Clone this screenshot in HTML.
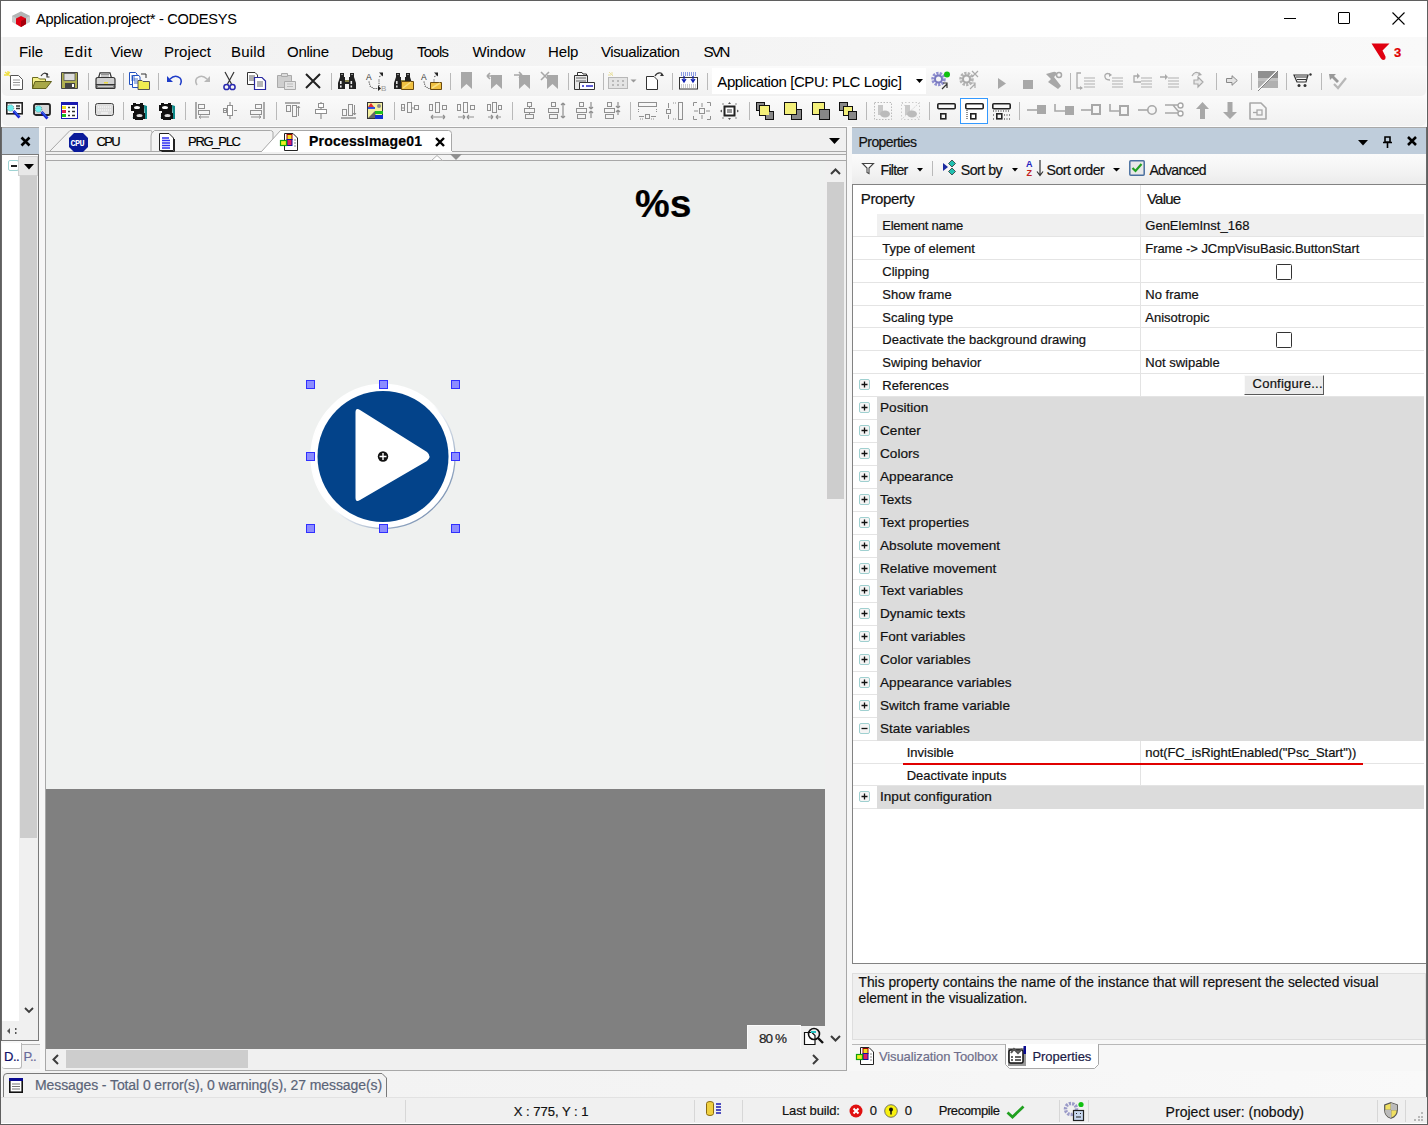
<!DOCTYPE html>
<html><head><meta charset="utf-8">
<style>
*{margin:0;padding:0;box-sizing:border-box}
html,body{width:1428px;height:1125px;overflow:hidden}
body{position:relative;background:#f7f7f7;font-family:"Liberation Sans",sans-serif;color:#000}
.a{position:absolute}
.t{position:absolute;white-space:nowrap;line-height:1;-webkit-text-stroke:0.2px currentColor}
svg{position:absolute;overflow:visible}
</style></head><body>
<div class="a" style="left:0px;top:0px;width:1428px;height:37px;background:#fff;"></div>
<svg style="left:11px;top:10px;" width="20" height="18" viewBox="0 0 20 18"><path d="M1 6L10 1.5L19 6V12L10 17L1 12Z" fill="#c9cbcb"/><path d="M10 1.5L19 6L10 10.5L1 6Z" fill="#b3b5b5"/><path d="M5 8.5L10 6L15 8.5V14L10 17L5 14Z" fill="#e00012"/><path d="M10 11V17L15 14V8.5Z" fill="#a8000c"/></svg>
<div class="t" style="left:36px;top:11.59px;font-size:14.6px;color:#000;letter-spacing:-0.288px;-webkit-text-stroke:0.05px #000">Application.project* - CODESYS</div>
<div class="a" style="left:1284px;top:18px;width:12px;height:1px;background:#000;"></div>
<div class="a" style="left:1338px;top:12px;width:12px;height:12px;border:1px solid #000;border-radius:1px"></div>
<svg style="left:1392px;top:12px;" width="13" height="13" viewBox="0 0 13 13"><path d="M0.5 0.5L12.5 12.5M12.5 0.5L0.5 12.5" stroke="#000" stroke-width="1.1"/></svg>
<div class="a" style="left:3px;top:37px;width:1422px;height:29px;background:linear-gradient(to right,#f2f2f2,#f4f4f4 50%,#f9f9f9);"></div>
<div class="t" style="left:19px;top:44.25px;font-size:15px;color:#000;letter-spacing:-0.05px;-webkit-text-stroke:0.05px #000">File</div>
<div class="t" style="left:64px;top:44.25px;font-size:15px;color:#000;letter-spacing:0.683px;-webkit-text-stroke:0.05px #000">Edit</div>
<div class="t" style="left:110.5px;top:44.25px;font-size:15px;color:#000;letter-spacing:-0.133px;-webkit-text-stroke:0.05px #000">View</div>
<div class="t" style="left:164px;top:44.25px;font-size:15px;color:#000;letter-spacing:0.058px;-webkit-text-stroke:0.05px #000">Project</div>
<div class="t" style="left:231px;top:44.25px;font-size:15px;color:#000;letter-spacing:0.175px;-webkit-text-stroke:0.05px #000">Build</div>
<div class="t" style="left:287px;top:44.25px;font-size:15px;color:#000;letter-spacing:-0.27px;-webkit-text-stroke:0.05px #000">Online</div>
<div class="t" style="left:351.5px;top:44.25px;font-size:15px;color:#000;letter-spacing:-0.562px;-webkit-text-stroke:0.05px #000">Debug</div>
<div class="t" style="left:417px;top:44.25px;font-size:15px;color:#000;letter-spacing:-0.738px;-webkit-text-stroke:0.05px #000">Tools</div>
<div class="t" style="left:472.5px;top:44.25px;font-size:15px;color:#000;letter-spacing:-0.08px;-webkit-text-stroke:0.05px #000">Window</div>
<div class="t" style="left:548px;top:44.25px;font-size:15px;color:#000;letter-spacing:-0.133px;-webkit-text-stroke:0.05px #000">Help</div>
<div class="t" style="left:601px;top:44.25px;font-size:15px;color:#000;letter-spacing:-0.417px;-webkit-text-stroke:0.05px #000">Visualization</div>
<div class="t" style="left:703.5px;top:44.25px;font-size:15px;color:#000;letter-spacing:-1.95px;-webkit-text-stroke:0.05px #000">SVN</div>
<svg style="left:1371px;top:43px;" width="19" height="18" viewBox="0 0 19 18"><path d="M0.5 0.5H18.5L11.5 7.5L14.5 13.5Q15 17 12 17Q10.5 16.5 9.8 15.2Z" fill="#e00010"/></svg>
<div class="t" style="left:1394px;top:46.45px;font-size:13px;color:#e00000;font-weight:bold;">3</div>
<div class="a" style="left:0px;top:66px;width:1428px;height:61px;background:#fbfbfb;"></div>
<div class="a" style="left:2px;top:67px;width:1424px;height:28.5px;background:linear-gradient(#fafafa,#f1f1f1);border-radius:0 0 5px 5px"></div>
<div class="a" style="left:2px;top:97px;width:1424px;height:28.5px;background:linear-gradient(#fafafa,#f1f1f1);border-radius:5px"></div>
<svg style="left:4px;top:71px;" width="20" height="19" viewBox="0 0 20 19"><path d="M6.5 4.5H14.5L18.5 8.5V18.5H6.5Z" fill="#fff" stroke="#555"/><path d="M9 9H16M9 11.5H16M9 14H16" stroke="#999"/><path d="M1 1L6 5M4 0V4M0 4H4M6 1L4 3" stroke="#f0e040" stroke-width="1.3"/></svg>
<svg style="left:32px;top:72px;" width="20" height="18" viewBox="0 0 20 18"><path d="M0.5 5.5H6L7.5 7H13.5V16.5H0.5Z" fill="#f5f08a" stroke="#6b6b20"/><path d="M3 9.5H19.5L14 16.5H0.5Z" fill="#a8a848" stroke="#60601c"/><path d="M9 4Q12 -1 16 3" stroke="#333" fill="none" stroke-width="1.2"/><path d="M15 1V5H17.5" stroke="#333" fill="none" stroke-width="1.2"/></svg>
<svg style="left:61px;top:72px;" width="18" height="17" viewBox="0 0 18 17"><path d="M0.5 0.5H16.5V16.5H0.5Z" fill="#b0b050" stroke="#444"/><rect x="3" y="1.5" width="11" height="7" fill="#ddd" stroke="#555" stroke-width=".8"/><rect x="4" y="11" width="10" height="5.5" fill="#444"/><rect x="11" y="12" width="2" height="3" fill="#fff"/></svg>
<div class="a" style="left:88px;top:73px;width:1px;height:17px;background:#b9b9b9;"></div>
<svg style="left:95px;top:72px;" width="21" height="18" viewBox="0 0 21 18"><path d="M5 0.8H15L16.5 6H3.5Z" fill="#fff" stroke="#333" stroke-width="1.2"/><path d="M6 2.5H14M6 4H14" stroke="#777" stroke-width=".8"/><path d="M1 7.5Q1 5.5 3 5.5H18Q20 5.5 20 7.5V12.5H1Z" fill="#d0d0d0" stroke="#333" stroke-width="1.2"/><rect x="1" y="12.5" width="19" height="4" rx="1" fill="#888" stroke="#333" stroke-width="1.2"/><rect x="9" y="10" width="4" height="1.5" fill="#e8d840"/><path d="M3 14.5H18" stroke="#ccc"/></svg>
<div class="a" style="left:123px;top:73px;width:1px;height:17px;background:#b9b9b9;"></div>
<svg style="left:129px;top:72px;" width="21" height="18" viewBox="0 0 21 18"><path d="M0.5 0.5H6.5L8 2V12.5H0.5Z" fill="#fff" stroke="#2050c0"/><path d="M3.5 3.5H10L11 5V15.5H3.5Z" fill="#fff" stroke="#2050c0"/><path d="M2 4H6M2 6H6M2 8H6M5 7H9M5 9H9M5 11H9" stroke="#2050c0" stroke-width=".8"/><path d="M9 8.5H13L14 9.5H20.5V17.5H9Z" fill="#f0ec50" stroke="#555"/><path d="M12 2H17V6" stroke="#333" fill="none"/></svg>
<div class="a" style="left:158px;top:73px;width:1px;height:17px;background:#b9b9b9;"></div>
<svg style="left:167px;top:74px;" width="16" height="13" viewBox="0 0 16 13"><path d="M3 5Q8 0 13 4Q15.5 7 13 11" stroke="#1e3cc8" stroke-width="1.5" fill="none"/><path d="M0 2L6 8H0Z" fill="#1e3cc8"/></svg>
<svg style="left:194px;top:74px;" width="16" height="13" viewBox="0 0 16 13"><path d="M13 5Q8 0 3 4Q0.5 7 3 11" stroke="#b8b8b8" stroke-width="1.6" fill="none"/><path d="M16 2L10 8H16Z" fill="#b8b8b8"/></svg>
<svg style="left:223px;top:72px;" width="13" height="19" viewBox="0 0 13 19"><path d="M2 0L8.5 12M11 0L4.5 12" stroke="#333" stroke-width="1.2"/><circle cx="3.5" cy="15" r="2.6" fill="none" stroke="#2828b0" stroke-width="1.5"/><circle cx="9.5" cy="15" r="2.6" fill="none" stroke="#2828b0" stroke-width="1.5"/></svg>
<svg style="left:247px;top:72px;" width="19" height="18" viewBox="0 0 19 18"><path d="M0.5 0.5H8L10.5 3V12.5H0.5Z" fill="#fff" stroke="#333"/><path d="M2 4H8M2 6H8M2 8H8" stroke="#333" stroke-width=".8"/><path d="M7.5 5.5H15L18.5 9V17.5H7.5Z" fill="#fff" stroke="#2828a0" stroke-width="1.2"/><path d="M10 10H16M10 12H16M10 14H16" stroke="#444" stroke-width=".8"/></svg>
<svg style="left:276px;top:72px;" width="20" height="18" viewBox="0 0 20 18"><path d="M1.5 3.5H15.5V15.5H1.5Z" fill="#cfcfcf" stroke="#aaa"/><path d="M5.5 1.5H11.5V4.5H5.5Z" fill="#ddd" stroke="#aaa"/><path d="M8.5 9.5H19.5V17.5H8.5Z" fill="#e4e4e4" stroke="#aaa"/><path d="M11 12H17M11 14.5H17" stroke="#bbb"/></svg>
<svg style="left:305px;top:73px;" width="16" height="16" viewBox="0 0 16 16"><path d="M1 1L15 15M15 1L1 15" stroke="#222" stroke-width="2"/></svg>
<div class="a" style="left:331px;top:73px;width:1px;height:17px;background:#b9b9b9;"></div>
<svg style="left:338px;top:72px;" width="19" height="18" viewBox="0 0 19 18"><path d="M2 1H6V5H7V8H11V5H12V1H16V5L18 11V17H11V12H7V17H0V11L2 5Z" fill="#222"/><rect x="2" y="9" width="1.6" height="3" fill="#eee"/><rect x="2" y="13.5" width="1.6" height="2" fill="#eee"/><rect x="12.5" y="9" width="1.6" height="3" fill="#eee"/><rect x="12.5" y="13.5" width="1.6" height="2" fill="#eee"/><rect x="3" y="2" width="2" height="1" fill="#888"/><rect x="13" y="2" width="2" height="1" fill="#888"/><path d="M7 9H11" stroke="#e8e070"/></svg>
<svg style="left:366px;top:72px;" width="22" height="18" viewBox="0 0 22 18"><text x="0" y="7.5" font-size="8.5" fill="#333" font-family="Liberation Sans">A</text><path d="M3 9.5L4 14L7.5 16.5H12M13 14V7M13.5 5L16 2" stroke="#444" stroke-width="1.1" stroke-dasharray="1.1 1.1" fill="none"/><path d="M17 0.5V4.5L13 0.5Z" fill="#222"/><path d="M12 13.5L15 16.5L12 19Z" fill="#222"/><text x="15" y="19" font-size="8" fill="#999" font-family="Liberation Sans">B</text></svg>
<svg style="left:394px;top:72px;" width="20" height="18" viewBox="0 0 20 18"><path d="M2 1H6V5H7V8H11V5H12V1H16V5L18 11V17H11V12H7V17H0V11L2 5Z" fill="#222"/><rect x="2" y="9" width="1.6" height="3" fill="#ddd"/><rect x="2" y="13.5" width="1.6" height="2" fill="#ddd"/><rect x="12.5" y="9" width="1.6" height="3" fill="#ddd"/><rect x="12.5" y="13.5" width="1.6" height="2" fill="#ddd"/><rect x="3" y="2" width="2" height="1" fill="#888"/><rect x="13" y="2" width="2" height="1" fill="#888"/><path d="M7 9H11" stroke="#e8e070"/><path d="M7.5 9.5H19.5V17.5H7.5Z" fill="#f0c040" stroke="#6a4a10"/><path d="M9 16L17 10" stroke="#fff0a0" stroke-width="1.5" opacity=".7"/></svg>
<svg style="left:421px;top:72px;" width="21" height="18" viewBox="0 0 21 18"><text x="0" y="7.5" font-size="8.5" fill="#333" font-family="Liberation Sans">A</text><path d="M3 9.5L4 14L7.5 16.5H12M13 14V7M13.5 5L16 2" stroke="#444" stroke-width="1.1" stroke-dasharray="1.1 1.1" fill="none"/><path d="M17 0.5V4.5L13 0.5Z" fill="#222"/><path d="M9.5 10.5H20.5V17.5H9.5Z" fill="#f0c040" stroke="#6a4a10"/><path d="M11 16L19 11" stroke="#fff0a0" stroke-width="1.5" opacity=".7"/></svg>
<div class="a" style="left:450px;top:73px;width:1px;height:17px;background:#b9b9b9;"></div>
<svg style="left:461px;top:72px;" width="11" height="17" viewBox="0 0 11 17"><path d="M0 0H11V17L5.5 12L0 17Z" fill="#a8a8a8"/></svg>
<svg style="left:487px;top:72px;" width="15" height="17" viewBox="0 0 15 17"><path d="M4 3H15V17L9.5 12L4 17Z" fill="#a8a8a8"/><path d="M0 4H8M0 4L3 1M0 4L3 7" stroke="#a8a8a8" stroke-width="1.6"/></svg>
<svg style="left:514px;top:72px;" width="16" height="17" viewBox="0 0 16 17"><path d="M5 3H16V17L10.5 12L5 17Z" fill="#a8a8a8"/><path d="M0 3H8M8 3L5 0M8 3L5 6" stroke="#a8a8a8" stroke-width="1.6"/></svg>
<svg style="left:541px;top:72px;" width="17" height="17" viewBox="0 0 17 17"><path d="M6 3H17V17L11.5 12L6 17Z" fill="#a8a8a8"/><path d="M0 0L8 8M8 0L0 8" stroke="#a8a8a8" stroke-width="1.6"/></svg>
<div class="a" style="left:568px;top:73px;width:1px;height:17px;background:#b9b9b9;"></div>
<svg style="left:574px;top:72px;" width="21" height="18" viewBox="0 0 21 18"><path d="M3.5 0.5H8L9 2H12.5V7.5H3.5Z" fill="#fff" stroke="#333"/><path d="M0.5 3.5H13.5V17.5H0.5Z" fill="#e8e8e8" stroke="#333"/><path d="M2 6H12M2 9H12" stroke="#666"/><path d="M5.5 10.5H20.5V17.5H5.5Z" fill="#fff" stroke="#333"/><path d="M8 14H10M12 14H19" stroke="#2828c8" stroke-width="1.5"/></svg>
<div class="a" style="left:603px;top:73px;width:1px;height:17px;background:#b9b9b9;"></div>
<svg style="left:608px;top:72px;" width="29" height="18" viewBox="0 0 29 18"><rect x="0.5" y="5.5" width="19" height="11" fill="#e4e4e4" stroke="#b8b8b8"/><path d="M4 9H6M9 9H11M14 9H16M4 13H6M9 13H11M14 13H16" stroke="#aaa" stroke-width="1.5"/><path d="M1 0L5 4M4 0V3M0 3H3" stroke="#e8e0a0"/><path d="M22.5 7.5H28.5L25.5 10.5Z" fill="#999"/></svg>
<svg style="left:646px;top:72px;" width="18" height="18" viewBox="0 0 18 18"><path d="M0.5 4.5H8L11.5 8V17.5H0.5Z" fill="#fff" stroke="#333"/><path d="M9 4Q11 0 15 1L16.5 4" stroke="#333" fill="none" stroke-width="1.2"/><path d="M14 4H18L16 1Z" fill="#333"/></svg>
<div class="a" style="left:672px;top:73px;width:1px;height:17px;background:#b9b9b9;"></div>
<svg style="left:679px;top:72px;" width="19" height="18" viewBox="0 0 19 18"><rect x="0.5" y="5.5" width="18" height="11.5" fill="#fff" stroke="#333"/><path d="M2 13H17M2 15H17" stroke="#999" stroke-dasharray="1 1"/><path d="M2 1H17M2 3H17" stroke="#2040d0" stroke-dasharray="1 1"/><path d="M5 4V9M3 7L5 10L7 7M14 4V9M12 7L14 10L16 7" stroke="#1020b0" stroke-width="1.3" fill="none"/></svg>
<div class="a" style="left:707px;top:73px;width:1px;height:17px;background:#b9b9b9;"></div>
<div class="a" style="left:712px;top:68px;width:214px;height:26px;background:#fff;"></div>
<div class="t" style="left:717.3px;top:74.25px;font-size:15px;color:#000;letter-spacing:-0.391px;-webkit-text-stroke:0.05px #000">Application [CPU: PLC Logic]</div>
<svg style="left:916px;top:79px;" width="7" height="4" viewBox="0 0 7 4"><path d="M0 0H7L3.5 4Z" fill="#000"/></svg>
<svg style="left:931px;top:71px;" width="21" height="20" viewBox="0 0 21 20"><circle cx="7.5" cy="8" r="5.5" fill="none" stroke="#8f8fd0" stroke-width="3.5" stroke-dasharray="2.2 1.1"/><circle cx="7.5" cy="8" r="3.5" fill="none" stroke="#7a7ac0" stroke-width="2"/><circle cx="16" cy="3.5" r="3" fill="#10c010"/><path d="M12 12H16V17M11 18L16 13" stroke="#333" stroke-width="1.2" fill="none"/></svg>
<svg style="left:959px;top:71px;" width="21" height="20" viewBox="0 0 21 20"><circle cx="7.5" cy="8" r="5.5" fill="none" stroke="#b4b4b4" stroke-width="3.5" stroke-dasharray="2.2 1.1"/><circle cx="7.5" cy="8" r="3.5" fill="none" stroke="#aaa" stroke-width="2"/><path d="M13 0L19 6M19 0L13 6M12 12H16V17M11 18L16 13" stroke="#aaa" stroke-width="1.2" fill="none"/></svg>
<svg style="left:998px;top:78px;" width="8" height="11" viewBox="0 0 8 11"><path d="M0 0L8 5.5L0 11Z" fill="#a8a8a8"/></svg>
<div class="a" style="left:1023px;top:80px;width:10px;height:9px;background:#a8a8a8;"></div>
<svg style="left:1044px;top:71px;" width="19" height="19" viewBox="0 0 19 19"><path d="M2 3L7 8L4 11L14 18L17 15L10 6L13 3Q12 0 9 1Z" fill="#a8a8a8"/><circle cx="15" cy="4" r="2.5" fill="none" stroke="#a8a8a8" stroke-width="1.5"/></svg>
<div class="a" style="left:1070px;top:73px;width:1px;height:17px;background:#b9b9b9;"></div>
<svg style="left:1076px;top:72px;" width="20" height="19" viewBox="0 0 20 19"><path d="M5 1H1V16H6" stroke="#aaa" stroke-width="1.3" fill="none"/><path d="M4 14L7 16L4 18Z" fill="#aaa"/><path d="M8 6H19M8 9H19M8 12H19M8 15H19" stroke="#b0b0b0" stroke-width="1.2" stroke-dasharray="11 0"/></svg>
<svg style="left:1104px;top:72px;" width="20" height="19" viewBox="0 0 20 19"><path d="M6 8Q0 8 1 3Q3 0 7 3" stroke="#aaa" stroke-width="1.3" fill="none"/><path d="M5 1L8 3L5 5Z" fill="#aaa"/><path d="M8 6H19M8 9H19M8 12H19M8 15H19" stroke="#b0b0b0" stroke-width="1.2" stroke-dasharray="11 0"/></svg>
<svg style="left:1133px;top:72px;" width="19" height="19" viewBox="0 0 19 19"><path d="M8 10H1V4H5" stroke="#aaa" stroke-width="1.3" fill="none"/><path d="M4 1L7 4L4 7Z" fill="#aaa"/><path d="M8 6H19M8 9H19M8 12H19M8 15H19" stroke="#b0b0b0" stroke-width="1.2" stroke-dasharray="11 0"/></svg>
<svg style="left:1160px;top:72px;" width="19" height="19" viewBox="0 0 19 19"><path d="M0 5H6" stroke="#aaa" stroke-width="1.5"/><path d="M5 2L8 5L5 8Z" fill="#aaa"/><path d="M8 6H19M8 9H19M8 12H19M8 15H19" stroke="#b0b0b0" stroke-width="1.2" stroke-dasharray="11 0"/></svg>
<svg style="left:1190px;top:71px;" width="14" height="20" viewBox="0 0 14 20"><path d="M2 5Q5 -1 10 3M4 9H8V6L13 11L8 16V13H4Z" stroke="#aaa" stroke-width="1.2" fill="#e8e8e8"/><path d="M9 1L12 4L8 5Z" fill="#aaa"/></svg>
<div class="a" style="left:1216px;top:73px;width:1px;height:17px;background:#b9b9b9;"></div>
<svg style="left:1226px;top:75px;" width="12" height="11" viewBox="0 0 12 11"><path d="M0.5 3.5H6V0.7L11.3 5.5L6 10.3V7.5H0.5Z" fill="#e4e4e4" stroke="#888"/></svg>
<div class="a" style="left:1251px;top:73px;width:1px;height:17px;background:#b9b9b9;"></div>
<svg style="left:1258px;top:71px;" width="20" height="20" viewBox="0 0 20 20"><path d="M0 0H20V7H0Z" fill="#909090"/><path d="M0 7H20V10H0Z" fill="#c0c0c0"/><path d="M0 10H20V17H0Z" fill="#b0b0b0"/><path d="M0 19L19 0" stroke="#fff" stroke-width="1.5"/><path d="M0 20L20 0" stroke="#666" stroke-width=".8"/></svg>
<div class="a" style="left:1286px;top:73px;width:1px;height:17px;background:#b9b9b9;"></div>
<svg style="left:1294px;top:73px;" width="18" height="15" viewBox="0 0 18 15"><path d="M0 2H14L12 9H3Z" fill="none" stroke="#333" stroke-width="1.2"/><path d="M2 4H13M3 6.5H12" stroke="#333"/><circle cx="5" cy="12.5" r="1.5" fill="#333"/><circle cx="11" cy="12.5" r="1.5" fill="#333"/><circle cx="16.5" cy="1.5" r="1.2" fill="#333"/></svg>
<div class="a" style="left:1321px;top:73px;width:1px;height:17px;background:#b9b9b9;"></div>
<svg style="left:1328px;top:72px;" width="19" height="18" viewBox="0 0 19 18"><path d="M1 2H8L6 4L11 9L9 11L4 6L2 8Z" fill="#999"/><path d="M6 12L10 16L18 6" stroke="#b8b8b8" stroke-width="2.2" fill="none"/></svg>
<svg style="left:6px;top:102px;" width="17" height="18" viewBox="0 0 17 18"><rect x="0.8" y="0.8" width="15.4" height="11" fill="#fff" stroke="#222" stroke-width="1.6"/><path d="M10 4H14M10 6.5H14" stroke="#333" stroke-width="1.3"/><circle cx="4.5" cy="6" r="3.3" fill="#70f0f0" stroke="#555" stroke-width=".6" stroke-dasharray="1 1"/><path d="M7.5 9L13.5 15.5" stroke="#1a1ad0" stroke-width="2.8"/><path d="M8 9L13 14.5" stroke="#3aa0f0" stroke-width=".8"/></svg>
<svg style="left:33px;top:103px;" width="18" height="18" viewBox="0 0 18 18"><rect x="1" y="1" width="16" height="11" rx="1.8" fill="#d8d8d8" stroke="#222" stroke-width="1.8"/><circle cx="5.5" cy="6" r="3.3" fill="#70f0f0" stroke="#555" stroke-width=".6" stroke-dasharray="1 1"/><path d="M8.5 9L14.5 15.5" stroke="#1a1ad0" stroke-width="2.8"/><path d="M9 9L14 14.5" stroke="#3aa0f0" stroke-width=".8"/></svg>
<svg style="left:61px;top:102px;" width="17" height="17" viewBox="0 0 17 17"><rect x="0" y="0" width="17" height="17" fill="#1a1ab0"/><rect x="1" y="3" width="15" height="13" fill="#fff"/><rect x="1" y="4" width="4" height="3" fill="#f0e020"/><rect x="1" y="8" width="4" height="3" fill="#e02050"/><rect x="1" y="12" width="4" height="3" fill="#20c020"/><path d="M7 5.5H9M11 5.5H14M7 9.5H9M11 9.5H14M7 13.5H9M11 13.5H14" stroke="#333" stroke-width="1.6"/></svg>
<div class="a" style="left:88px;top:102px;width:1px;height:18px;background:#b9b9b9;"></div>
<svg style="left:95px;top:103px;" width="19" height="14" viewBox="0 0 19 14"><rect x="0.5" y="0.5" width="18" height="12" rx="2" fill="#ddd" stroke="#444"/><path d="M3 4H16M3 7H16" stroke="#fff" stroke-dasharray="1.2 .8"/><path d="M6 10H13" stroke="#fff"/></svg>
<div class="a" style="left:123px;top:102px;width:1px;height:18px;background:#b9b9b9;"></div>
<svg style="left:131px;top:103px;" width="16" height="17" viewBox="0 0 16 17"><path d="M13 2L16 3V16H14Z" fill="#0e8a8a"/><path d="M1 14L3 16H5Z" fill="#0e8a8a"/><path d="M2 0H5V1H9V0H12V2H13V8H11V9H3V8H0V2H2Z" fill="#111"/><path d="M3 8H6V9H10V8H13V10H14V16H12V17H4V16H2V10H3Z" fill="#111"/><ellipse cx="6" cy="4.5" rx="3" ry="1.6" fill="#fff"/><ellipse cx="8.5" cy="12.5" rx="3" ry="1.6" fill="#ddd"/></svg>
<svg style="left:159px;top:103px;" width="16" height="17" viewBox="0 0 16 17"><path d="M13 2L16 3V16H14Z" fill="#0e8a8a"/><path d="M1 14L3 16H5Z" fill="#0e8a8a"/><path d="M2 0H5V1H9V0H12V2H13V8H11V9H3V8H0V2H2Z" fill="#111"/><path d="M3 8H6V9H10V8H13V10H14V16H12V17H4V16H2V10H3Z" fill="#111"/><ellipse cx="6" cy="4.5" rx="3" ry="1.6" fill="#fff"/><ellipse cx="8.5" cy="12.5" rx="3" ry="1.6" fill="#ddd"/></svg>
<div class="a" style="left:185px;top:102px;width:1px;height:18px;background:#b9b9b9;"></div>
<svg style="left:195px;top:102px;" width="15" height="17" viewBox="0 0 15 17"><path d="M1 0V17" stroke="#909090" stroke-width="1.5"/><rect x="3.5" y="2.5" width="6" height="4" fill="none" stroke="#909090"/><rect x="3.5" y="8.5" width="11" height="4" fill="none" stroke="#909090"/><path d="M14 15H4M4 15L6 13.5M4 15L6 16.5" stroke="#909090"/></svg>
<svg style="left:223px;top:102px;" width="14" height="17" viewBox="0 0 14 17"><path d="M7 0V17" stroke="#909090" stroke-width="1.2"/><rect x="4.5" y="3.5" width="5" height="10" fill="#fff" stroke="#909090"/><path d="M0 8.5H3M11 8.5H14" stroke="#909090"/><rect x="0.5" y="6.5" width="3" height="4" fill="none" stroke="#909090"/></svg>
<svg style="left:250px;top:102px;" width="15" height="17" viewBox="0 0 15 17"><path d="M14 0V17" stroke="#909090" stroke-width="1.5"/><rect x="5.5" y="2.5" width="6" height="4" fill="none" stroke="#909090"/><rect x="0.5" y="8.5" width="11" height="4" fill="none" stroke="#909090"/><path d="M1 15H11M11 15L9 13.5M11 15L9 16.5" stroke="#909090"/></svg>
<div class="a" style="left:276px;top:102px;width:1px;height:18px;background:#b9b9b9;"></div>
<svg style="left:285px;top:102px;" width="15" height="17" viewBox="0 0 15 17"><path d="M0 1H15" stroke="#909090" stroke-width="1.5"/><rect x="1.5" y="3.5" width="4" height="6" fill="none" stroke="#909090"/><rect x="7.5" y="3.5" width="4" height="11" fill="none" stroke="#909090"/><path d="M13.5 14V4M13.5 4L12 6M13.5 4L15 6" stroke="#909090"/></svg>
<svg style="left:314px;top:102px;" width="14" height="17" viewBox="0 0 14 17"><path d="M7 0V17" stroke="#909090" stroke-width="1.2"/><rect x="4.5" y="1.5" width="5" height="4" fill="#fff" stroke="#909090"/><rect x="1.5" y="7.5" width="11" height="4" fill="#fff" stroke="#909090"/></svg>
<svg style="left:341px;top:102px;" width="15" height="17" viewBox="0 0 15 17"><path d="M0 16H15" stroke="#909090" stroke-width="1.5"/><rect x="1.5" y="7.5" width="4" height="6" fill="none" stroke="#909090"/><rect x="7.5" y="2.5" width="4" height="11" fill="none" stroke="#909090"/><path d="M13.5 3V13M13.5 13L12 11M13.5 13L15 11" stroke="#909090"/></svg>
<svg style="left:367px;top:102px;" width="16" height="17" viewBox="0 0 16 17"><rect x="0.5" y="0.5" width="15" height="16" fill="#f4f0a0" stroke="#333"/><path d="M1 5L4 1L7 5Z" fill="#e03030"/><rect x="1" y="5" width="7" height="2" fill="#3050e0"/><circle cx="12" cy="4" r="2" fill="#888"/><path d="M1 16L8 9L9 16Z" fill="#666"/><rect x="8" y="9" width="8" height="3" fill="#20c020"/><rect x="8" y="13" width="8" height="4" fill="#1030d0"/></svg>
<div class="a" style="left:394px;top:102px;width:1px;height:18px;background:#b9b9b9;"></div>
<svg style="left:401px;top:102px;" width="19" height="18" viewBox="0 0 19 18"><rect x="0.5" y="2.5" width="3" height="6" fill="none" stroke="#909090"/><rect x="6.5" y="0.5" width="4" height="10" fill="none" stroke="#909090"/><rect x="13.5" y="3.5" width="4" height="4" fill="none" stroke="#909090"/><path d="M0 6H3M10 6H13" stroke="#909090"/></svg>
<svg style="left:429px;top:102px;" width="19" height="18" viewBox="0 0 19 18"><rect x="0.5" y="2.5" width="3" height="6" fill="none" stroke="#909090"/><rect x="6.5" y="0.5" width="4" height="10" fill="none" stroke="#909090"/><rect x="13.5" y="3.5" width="4" height="4" fill="none" stroke="#909090"/><path d="M2 15H16M2 15L4 13M2 15L4 17M16 15L14 13M16 15L14 17" stroke="#909090" stroke-width="1.2"/></svg>
<svg style="left:457px;top:102px;" width="19" height="18" viewBox="0 0 19 18"><rect x="0.5" y="2.5" width="3" height="6" fill="none" stroke="#909090"/><rect x="6.5" y="0.5" width="4" height="10" fill="none" stroke="#909090"/><rect x="13.5" y="3.5" width="4" height="4" fill="none" stroke="#909090"/><path d="M1 15H8M8 15L6 13M8 15L6 17M17 15H10M10 15L12 13M10 15L12 17" stroke="#909090" stroke-width="1.2"/></svg>
<svg style="left:487px;top:102px;" width="15" height="18" viewBox="0 0 15 18"><rect x="0.5" y="2.5" width="3" height="6" fill="none" stroke="#909090"/><rect x="5.5" y="0.5" width="4" height="10" fill="none" stroke="#909090"/><rect x="11.5" y="3.5" width="3" height="4" fill="none" stroke="#909090"/><path d="M1 15H6M6 15L4 13M6 15L4 17M14 15H9M9 15L11 13M9 15L11 17" stroke="#909090" stroke-width="1.2"/></svg>
<div class="a" style="left:512px;top:102px;width:1px;height:18px;background:#b9b9b9;"></div>
<svg style="left:524px;top:102px;" width="11" height="18" viewBox="0 0 11 18"><rect x="3.5" y="0.5" width="4" height="4" fill="none" stroke="#909090"/><rect x="0.5" y="6.5" width="10" height="4" fill="none" stroke="#909090"/><rect x="1.5" y="12.5" width="8" height="4" fill="none" stroke="#909090"/><path d="M5.5 4V6M5.5 10V12" stroke="#909090"/></svg>
<svg style="left:548px;top:102px;" width="18" height="18" viewBox="0 0 18 18"><rect x="3.5" y="0.5" width="4" height="4" fill="none" stroke="#909090"/><rect x="0.5" y="6.5" width="10" height="4" fill="none" stroke="#909090"/><rect x="1.5" y="12.5" width="8" height="4" fill="none" stroke="#909090"/><path d="M15 1V16M15 1L13 3M15 1L17 3M15 16L13 14M15 16L17 14" stroke="#909090" stroke-width="1.2"/></svg>
<svg style="left:576px;top:102px;" width="18" height="18" viewBox="0 0 18 18"><rect x="3.5" y="0.5" width="4" height="4" fill="none" stroke="#909090"/><rect x="0.5" y="6.5" width="10" height="4" fill="none" stroke="#909090"/><rect x="1.5" y="12.5" width="8" height="4" fill="none" stroke="#909090"/><path d="M15 0V7M15 7L13 5M15 7L17 5M15 16V9M15 9L13 11M15 9L17 11" stroke="#909090" stroke-width="1.2"/></svg>
<svg style="left:604px;top:102px;" width="18" height="18" viewBox="0 0 18 18"><rect x="3.5" y="0.5" width="4" height="4" fill="none" stroke="#909090"/><rect x="0.5" y="6.5" width="10" height="4" fill="none" stroke="#909090"/><rect x="1.5" y="12.5" width="8" height="4" fill="none" stroke="#909090"/><path d="M14 0V6M14 6L12 4M14 6L16 4M14 13V8M14 8L12 10M14 8L16 10" stroke="#909090" stroke-width="1.2"/></svg>
<div class="a" style="left:630px;top:102px;width:1px;height:18px;background:#b9b9b9;"></div>
<svg style="left:638px;top:102px;" width="19" height="18" viewBox="0 0 19 18"><rect x="0.5" y="0.5" width="18" height="4" fill="none" stroke="#909090"/><path d="M0.5 7V11M18.5 7V11M2 17H6M13 17H17" stroke="#909090" stroke-dasharray="1 1"/><rect x="7.5" y="12.5" width="4" height="4" fill="none" stroke="#909090"/><path d="M1 14.5H6M13 14.5H18" stroke="#909090"/></svg>
<svg style="left:666px;top:102px;" width="18" height="18" viewBox="0 0 18 18"><rect x="12.5" y="0.5" width="4" height="17" fill="none" stroke="#909090"/><path d="M7 1H11M7 17H11" stroke="#909090" stroke-dasharray="1 1"/><rect x="0.5" y="7.5" width="4" height="4" fill="none" stroke="#909090"/><path d="M2.5 1V6M2.5 13V17" stroke="#909090"/></svg>
<svg style="left:693px;top:102px;" width="18" height="18" viewBox="0 0 18 18"><path d="M0.5 4V0.5H4M14 0.5H17.5V4M17.5 14V17.5H14M4 17.5H0.5V14" stroke="#909090" fill="none"/><rect x="6.5" y="6.5" width="5" height="5" fill="none" stroke="#909090"/><path d="M9 1V5M9 13V17M1 9H5M13 9H17" stroke="#909090"/></svg>
<svg style="left:720px;top:102px;" width="19" height="18" viewBox="0 0 19 18"><rect x="4.5" y="4.5" width="10" height="9" fill="#fff" stroke="#222" stroke-width="2"/><rect x="7" y="7" width="5" height="4" fill="#999"/><path d="M9.5 0L8 2H11ZM9.5 18L8 16H11ZM0 9L2 7.5V10.5ZM19 9L17 7.5V10.5Z" fill="#555"/><path d="M2 2H4M15 2H17M2 16H4M15 16H17" stroke="#888"/></svg>
<div class="a" style="left:749px;top:102px;width:1px;height:18px;background:#b9b9b9;"></div>
<svg style="left:756px;top:102px;" width="18" height="18" viewBox="0 0 18 18"><rect x="0.5" y="0.5" width="8" height="8" fill="#888" stroke="#111"/><rect x="3.5" y="3.5" width="10" height="10" fill="#f4f07a" stroke="#111"/><rect x="9.5" y="9.5" width="8" height="8" fill="#888" stroke="#111"/><rect x="4" y="4" width="9" height="9" fill="#f4f07a"/></svg>
<svg style="left:784px;top:102px;" width="18" height="18" viewBox="0 0 18 18"><rect x="7.5" y="7.5" width="10" height="10" fill="#888" stroke="#111"/><rect x="0.5" y="0.5" width="12" height="12" fill="#f4f07a" stroke="#111"/></svg>
<svg style="left:812px;top:102px;" width="18" height="18" viewBox="0 0 18 18"><rect x="0.5" y="0.5" width="12" height="12" fill="#f4f07a" stroke="#111"/><rect x="7.5" y="7.5" width="10" height="10" fill="#888" stroke="#111"/></svg>
<svg style="left:839px;top:102px;" width="18" height="18" viewBox="0 0 18 18"><rect x="0.5" y="0.5" width="8" height="8" fill="#888" stroke="#111"/><rect x="9.5" y="9.5" width="8" height="8" fill="#888" stroke="#111"/><rect x="4.5" y="4.5" width="9" height="9" fill="#f4f07a" stroke="#111"/><rect x="9.5" y="9.5" width="8" height="8" fill="#888" stroke="#111"/></svg>
<div class="a" style="left:866px;top:102px;width:1px;height:18px;background:#b9b9b9;"></div>
<svg style="left:874px;top:102px;" width="18" height="18" viewBox="0 0 18 18"><path d="M0.5 0.5H17.5V17.5H0.5Z" fill="none" stroke="#bbb" stroke-dasharray="1.5 1.5"/><rect x="4" y="3" width="5" height="10" fill="#c8c8c8"/><ellipse cx="11" cy="12" rx="5" ry="3.5" fill="#bbb"/></svg>
<svg style="left:901px;top:102px;" width="19" height="18" viewBox="0 0 19 18"><path d="M1 1L18 17M18 1L1 17" stroke="#ccc" stroke-dasharray="1.5 1.5"/><path d="M0.5 0.5H18.5V17.5H0.5Z" fill="none" stroke="#ccc" stroke-dasharray="1.5 2"/><rect x="4" y="3" width="5" height="10" fill="#c8c8c8"/><ellipse cx="11" cy="12" rx="5" ry="3.5" fill="#bbb"/></svg>
<div class="a" style="left:929px;top:102px;width:1px;height:18px;background:#b9b9b9;"></div>
<svg style="left:937px;top:103px;" width="19" height="17" viewBox="0 0 19 17"><rect x="0.8" y="0.8" width="17.4" height="5" rx="1" fill="none" stroke="#222" stroke-width="1.6"/><rect x="3.8" y="10.8" width="5" height="5" fill="none" stroke="#222" stroke-width="1.6"/></svg>
<div class="a" style="left:960px;top:97.5px;width:28px;height:26px;background:#fff;border:1px solid #3399ff"></div>
<svg style="left:965px;top:103px;" width="19" height="17" viewBox="0 0 19 17"><rect x="0.8" y="0.8" width="17.4" height="5" rx="1" fill="none" stroke="#222" stroke-width="1.6"/><rect x="5.8" y="10.8" width="5" height="5" fill="none" stroke="#222" stroke-width="1.6"/><path d="M2 7V17" stroke="#222" stroke-dasharray="1 1"/></svg>
<svg style="left:992px;top:103px;" width="19" height="17" viewBox="0 0 19 17"><rect x="0.8" y="0.8" width="17.4" height="5" rx="1" fill="none" stroke="#222" stroke-width="1.6"/><rect x="4.8" y="10.8" width="5" height="5" fill="none" stroke="#222" stroke-width="1.6"/><path d="M1 8H18M1 16H3M12 16H18M1 12H3M12 12H18" stroke="#222" stroke-dasharray="1 1.5"/></svg>
<div class="a" style="left:1019px;top:102px;width:1px;height:18px;background:#b9b9b9;"></div>
<svg style="left:1027px;top:103px;" width="19" height="14" viewBox="0 0 19 14"><path d="M0 7H10" stroke="#a8a8a8" stroke-width="1.6"/><rect x="10" y="2" width="9" height="9" fill="#a8a8a8"/></svg>
<svg style="left:1054px;top:103px;" width="20" height="14" viewBox="0 0 20 14"><path d="M1 1V8H11" stroke="#a8a8a8" stroke-width="1.6" fill="none"/><rect x="11" y="3" width="9" height="9" fill="#a8a8a8"/></svg>
<svg style="left:1081px;top:103px;" width="20" height="14" viewBox="0 0 20 14"><path d="M0 7H10" stroke="#a8a8a8" stroke-width="1.6"/><rect x="11" y="2" width="8" height="9" fill="none" stroke="#a8a8a8" stroke-width="2"/></svg>
<svg style="left:1109px;top:103px;" width="20" height="14" viewBox="0 0 20 14"><path d="M1 1V8H10" stroke="#a8a8a8" stroke-width="1.6" fill="none"/><rect x="11" y="3" width="8" height="9" fill="none" stroke="#a8a8a8" stroke-width="2"/></svg>
<svg style="left:1138px;top:103px;" width="19" height="14" viewBox="0 0 19 14"><path d="M0 7H10" stroke="#a8a8a8" stroke-width="1.6"/><circle cx="14" cy="7" r="4.2" fill="none" stroke="#a8a8a8" stroke-width="1.6"/></svg>
<svg style="left:1165px;top:102px;" width="19" height="17" viewBox="0 0 19 17"><path d="M0 3H15M0 11H15M8 3Q11 7 15 11" stroke="#a8a8a8" stroke-width="1.4" fill="none"/><circle cx="15.5" cy="3.5" r="2.5" fill="#fff" stroke="#a8a8a8" stroke-width="1.4"/><circle cx="15.5" cy="11.5" r="2.5" fill="#fff" stroke="#a8a8a8" stroke-width="1.4"/></svg>
<svg style="left:1196px;top:102px;" width="13" height="17" viewBox="0 0 13 17"><path d="M6.5 0L13 7H9V17H4V7H0Z" fill="#a8a8a8"/></svg>
<svg style="left:1223px;top:102px;" width="14" height="17" viewBox="0 0 14 17"><path d="M7 17L14 10H9.5V0H4.5V10H0Z" fill="#a8a8a8"/></svg>
<svg style="left:1249px;top:102px;" width="18" height="18" viewBox="0 0 18 18"><path d="M1 1H12L17 6V17H1Z" fill="none" stroke="#a8a8a8" stroke-width="1.6" stroke-linejoin="round"/><rect x="8" y="8" width="5" height="5" fill="none" stroke="#a8a8a8" stroke-width="1.3"/><path d="M4 10.5H8" stroke="#a8a8a8" stroke-width="1.3"/></svg>
<div class="a" style="left:1px;top:127px;width:38px;height:914px;background:#fff;border-right:1px solid #7a7a7a;border-bottom:1px solid #7a7a7a"></div>
<div class="a" style="left:2px;top:127px;width:37px;height:27px;background:#bfcddb;border-top:1px solid #a8a8a8"></div>
<div class="a" style="left:2px;top:154px;width:37px;height:1px;background:#7a7a7a;"></div>
<svg style="left:20px;top:136px;" width="11" height="11" viewBox="0 0 11 11"><path d="M1.5 1.5L9.5 9.5M9.5 1.5L1.5 9.5" stroke="#000" stroke-width="2.6"/></svg>
<div class="a" style="left:8px;top:160px;width:11px;height:11px;background:#fff;border:1px solid #9fd3d3;border-radius:2px"></div>
<div class="a" style="left:11px;top:165px;width:6px;height:2px;background:#222;"></div>
<div class="a" style="left:18px;top:156px;width:20px;height:20px;background:#e8e8e8;border:1px solid #d0d0d0"></div>
<svg style="left:24px;top:164px;" width="10" height="6" viewBox="0 0 10 6"><path d="M0 0H10L5 5.5Z" fill="#000"/></svg>
<div class="a" style="left:19px;top:176px;width:19px;height:845px;background:#f0f0f0;"></div>
<div class="a" style="left:19.5px;top:176px;width:17.5px;height:662px;background:#cdcdcd;"></div>
<svg style="left:24px;top:1007px;" width="10" height="7" viewBox="0 0 10 7"><path d="M1 1L5 5L9 1" stroke="#3c3c3c" stroke-width="1.8" fill="none"/></svg>
<div class="a" style="left:2px;top:1021px;width:36px;height:19px;background:#f0f0f0;"></div>
<svg style="left:6px;top:1027px;" width="12" height="8" viewBox="0 0 12 8"><path d="M4 1L1 4L4 7Z" fill="#555"/><rect x="9" y="1" width="1.5" height="2" fill="#555"/><rect x="9" y="5" width="1.5" height="2" fill="#555"/></svg>
<div class="a" style="left:22px;top:1044px;width:18px;height:25px;background:#f0f0f0;border-top:1px solid #b8b8b8"></div>
<div class="a" style="left:2px;top:1043px;width:20px;height:26px;background:#fff;border-right:1px solid #b8b8b8;border-bottom:1px solid #b8b8b8;border-radius:0 0 3px 3px"></div>
<div class="t" style="left:4px;top:1049.95px;font-size:13px;color:#10106a;letter-spacing:-0.5px;">D..</div>
<div class="t" style="left:23.5px;top:1049.95px;font-size:13px;color:#6a6a9a;letter-spacing:-0.5px;">P..</div>
<div class="a" style="left:45px;top:127px;width:802px;height:944px;background:#f0f0f0;border:1px solid #a8a8a8"></div>
<div class="a" style="left:46px;top:151px;width:800px;height:1px;background:#a8a8a8;"></div>
<svg style="left:49px;top:130px;" width="104" height="22" viewBox="0 0 104 22"><path d="M1 21L21 0.5H101.5Q103 0.5 103 2V21" fill="#f3f3f3" stroke="#a8a8a8"/></svg>
<svg style="left:150px;top:130px;" width="124" height="22" viewBox="0 0 124 22"><path d="M1 21V6Q1 3.5 3 2L4.5 0.5H120.5Q122 0.5 123 2V21" fill="#f3f3f3" stroke="#a8a8a8"/></svg>
<svg style="left:261px;top:130px;" width="192" height="22" viewBox="0 0 192 22"><path d="M0.5 21.5L19.5 0.5H187.5Q190.5 0.5 190.5 3.5V21.5" fill="#fff" stroke="#a8a8a8"/></svg>
<div class="a" style="left:262px;top:151px;width:190px;height:1px;background:#fff;"></div>
<svg style="left:69px;top:133px;" width="19" height="19" viewBox="0 0 19 19"><path d="M5 0H14L19 5V14L14 19H5L0 14V5Z" fill="#0a1a9a"/><text x="1.5" y="13" font-size="8.5" font-weight="bold" fill="#fff" font-family="Liberation Mono" letter-spacing="-0.6">CPU</text></svg>
<div class="t" style="left:96.5px;top:134.95px;font-size:13px;color:#000;letter-spacing:-1.715px;">CPU</div>
<svg style="left:159px;top:133px;" width="16" height="19" viewBox="0 0 16 19"><path d="M0.5 0.5H10L14.5 5V17.5H0.5Z" fill="#fff" stroke="#222"/><path d="M2.5 18.5H15.5V6" stroke="#222" fill="none"/><path d="M3 5H10M3 7.5H11M3 10H11M3 12.5H11M3 15H11" stroke="#3030f0" stroke-width="1.3"/></svg>
<div class="t" style="left:188px;top:134.95px;font-size:13px;color:#000;letter-spacing:-1.285px;">PRG_PLC</div>
<svg style="left:280px;top:133px;" width="19" height="19" viewBox="0 0 19 19"><path d="M4.5 0.5H13L17.5 5V17.5H4.5Z" fill="#fff" stroke="#222"/><path d="M14 7H16M14 10H16M14 13H16" stroke="#888"/><rect x="7" y="1.5" width="5" height="5" fill="#f0e020" stroke="#a00000" stroke-width="1"/><rect x="7" y="6.5" width="5" height="6" fill="#e02060" stroke="#1010a0" stroke-width="1"/><rect x="0.5" y="7.5" width="6" height="5" fill="#f0f020" stroke="#10a010" stroke-width="1.2"/></svg>
<div class="t" style="left:309px;top:134.10px;font-size:14px;color:#000;font-weight:bold;letter-spacing:0.195px;">ProcessImage01</div>
<svg style="left:435px;top:137px;" width="10" height="10" viewBox="0 0 10 10"><path d="M1 1L9 9M9 1L1 9" stroke="#000" stroke-width="2.4"/></svg>
<svg style="left:829px;top:138px;" width="11" height="6" viewBox="0 0 11 6"><path d="M0 0H11L5.5 6Z" fill="#000"/></svg>
<div class="a" style="left:46px;top:154px;width:800px;height:7px;background:#f4f4f4;border-top:1px solid #a8a8a8;border-bottom:1px solid #a8a8a8"></div>
<svg style="left:431px;top:155px;" width="12" height="6" viewBox="0 0 12 6"><path d="M0.5 5.5L6 0.5L11.5 5.5Z" fill="#fff" stroke="#b0b0b0"/></svg>
<svg style="left:450px;top:154px;" width="12" height="7" viewBox="0 0 12 7"><path d="M0 0H12L6 6Z" fill="#909090"/></svg>
<div class="a" style="left:46px;top:161px;width:779px;height:628px;background:#eff1f0;"></div>
<div class="a" style="left:46px;top:789px;width:779px;height:260px;background:#808080;"></div>
<div class="a" style="left:825px;top:161px;width:21px;height:888px;background:#f0f0f0;"></div>
<div class="a" style="left:827px;top:182px;width:17px;height:317px;background:#cdcdcd;"></div>
<svg style="left:830px;top:168px;" width="11" height="7" viewBox="0 0 11 7"><path d="M1 6L5.5 1.5L10 6" stroke="#3c3c3c" stroke-width="2" fill="none"/></svg>
<svg style="left:830px;top:1035px;" width="11" height="7" viewBox="0 0 11 7"><path d="M1 1L5.5 5.5L10 1" stroke="#3c3c3c" stroke-width="2" fill="none"/></svg>
<div class="a" style="left:46px;top:1049px;width:800px;height:21px;background:#f0f0f0;"></div>
<div class="a" style="left:66px;top:1050px;width:182px;height:18px;background:#cdcdcd;"></div>
<svg style="left:52px;top:1054px;" width="7" height="11" viewBox="0 0 7 11"><path d="M6 1L1.5 5.5L6 10" stroke="#3c3c3c" stroke-width="2" fill="none"/></svg>
<svg style="left:812px;top:1054px;" width="7" height="11" viewBox="0 0 7 11"><path d="M1 1L5.5 5.5L1 10" stroke="#3c3c3c" stroke-width="2" fill="none"/></svg>
<div class="a" style="left:747px;top:1025px;width:54px;height:24px;background:#f0f0f0;border:1px solid #fafafa;border-bottom:none"></div>
<div class="t" style="left:759px;top:1031.53px;font-size:13.5px;color:#222;letter-spacing:-0.927px;">80 %</div>
<div class="a" style="left:801px;top:1026px;width:24px;height:23px;background:#f0f0f0;"></div>
<svg style="left:804px;top:1027px;" width="20" height="19" viewBox="0 0 20 19"><path d="M0.5 5.5H8L11 8.5V17.5H0.5Z" fill="#fff" stroke="#111" stroke-width="1.2"/><circle cx="10" cy="7" r="5.5" fill="none" stroke="#111" stroke-width="1.6"/><path d="M7 5H12" stroke="#20c0c0" stroke-width="2"/><path d="M14 11L19 16" stroke="#111" stroke-width="2.4"/></svg>
<div class="t" style="left:635px;top:183.85px;font-size:39px;color:#000;font-weight:bold;">%s</div>
<svg style="left:300px;top:374px;" width="166" height="166" viewBox="0 0 166 166"><defs><linearGradient id="rg" x1="0" y1="0" x2="1" y2="1"><stop offset="0.5" stop-color="#ffffff"/><stop offset="0.8" stop-color="#8ea3bf"/><stop offset="1" stop-color="#5f7aa0"/></linearGradient></defs><circle cx="83" cy="82.5" r="72" fill="#fff" stroke="url(#rg)" stroke-width="1.3"/><circle cx="83" cy="82.5" r="65.5" fill="#03438a"/><path d="M60 36Q55.5 33 55.5 38.5V123.5Q55.5 129 60 126L127 87Q132 82.5 127 78Z" fill="#fff"/><circle cx="83" cy="82.5" r="5.2" fill="#111"/><path d="M83 79V86M79.5 82.5H86.5" stroke="#fff" stroke-width="1.4"/></svg>
<div class="a" style="left:306.0px;top:379.5px;width:9px;height:9px;background:#8c8cff;border:1.5px solid #3030ff"></div>
<div class="a" style="left:306.0px;top:452.0px;width:9px;height:9px;background:#8c8cff;border:1.5px solid #3030ff"></div>
<div class="a" style="left:306.0px;top:524.0px;width:9px;height:9px;background:#8c8cff;border:1.5px solid #3030ff"></div>
<div class="a" style="left:378.5px;top:379.5px;width:9px;height:9px;background:#8c8cff;border:1.5px solid #3030ff"></div>
<div class="a" style="left:378.5px;top:524.0px;width:9px;height:9px;background:#8c8cff;border:1.5px solid #3030ff"></div>
<div class="a" style="left:451.0px;top:379.5px;width:9px;height:9px;background:#8c8cff;border:1.5px solid #3030ff"></div>
<div class="a" style="left:451.0px;top:452.0px;width:9px;height:9px;background:#8c8cff;border:1.5px solid #3030ff"></div>
<div class="a" style="left:451.0px;top:524.0px;width:9px;height:9px;background:#8c8cff;border:1.5px solid #3030ff"></div>
<div class="a" style="left:852px;top:127px;width:575px;height:27px;background:#bfcddb;border-top:1px solid #a8a8a8"></div>
<div class="t" style="left:858.6px;top:134.60px;font-size:14px;color:#111;letter-spacing:-0.593px;">Properties</div>
<svg style="left:1358px;top:139.5px;" width="10" height="6" viewBox="0 0 10 6"><path d="M0 0H10L5 5.5Z" fill="#000"/></svg>
<svg style="left:1383px;top:136px;" width="9" height="12" viewBox="0 0 9 12"><path d="M2 1V6H7V1ZM0 6.5H9M4.5 7V12" stroke="#000" stroke-width="1.6" fill="none"/></svg>
<svg style="left:1407px;top:136px;" width="10" height="10" viewBox="0 0 10 10"><path d="M1 1L9 9M9 1L1 9" stroke="#000" stroke-width="2.5"/></svg>
<div class="a" style="left:852px;top:154px;width:575px;height:30px;background:linear-gradient(#fbfbfb,#f3f3f3 60%,#ebebeb);"></div>
<svg style="left:862px;top:163px;" width="12" height="11" viewBox="0 0 12 11"><path d="M0.5 0.5H11.5L7 5V10.5L5 9.5V5Z" fill="#fff" stroke="#444" stroke-width="1.1"/></svg>
<div class="t" style="left:880.5px;top:162.93px;font-size:14.2px;color:#111;letter-spacing:-0.745px;">Filter</div>
<svg style="left:917px;top:168px;" width="6" height="3.5" viewBox="0 0 6 3.5"><path d="M0 0H6L3 3.5Z" fill="#000"/></svg>
<div class="a" style="left:932px;top:160.5px;width:1px;height:15px;background:#b9b9b9;"></div>
<svg style="left:943px;top:160px;" width="14" height="16" viewBox="0 0 14 16"><path d="M0 3L5 7L0 11Z" fill="#1a2aa0"/><path d="M9 0L12.5 3.5L9 7L5.5 3.5Z" fill="#20c0b0" stroke="#333" stroke-width=".8"/><path d="M9 8L12.5 11.5L9 15L5.5 11.5Z" fill="#20c0b0" stroke="#333" stroke-width=".8"/></svg>
<div class="t" style="left:960.7px;top:162.93px;font-size:14.2px;color:#111;letter-spacing:-0.502px;">Sort by</div>
<svg style="left:1011.5px;top:168px;" width="6" height="3.5" viewBox="0 0 6 3.5"><path d="M0 0H6L3 3.5Z" fill="#000"/></svg>
<svg style="left:1026px;top:159px;" width="19" height="18" viewBox="0 0 19 18"><text x="0" y="8" font-size="9" font-weight="bold" fill="#2020c0" font-family="Liberation Sans">A</text><text x="0.5" y="17" font-size="9" font-weight="bold" fill="#c02020" font-family="Liberation Sans">Z</text><path d="M14 1V16M11 12.5L14 16.5L17 12.5" stroke="#333" stroke-width="1.2" fill="none"/></svg>
<div class="t" style="left:1046.6px;top:162.93px;font-size:14.2px;color:#111;letter-spacing:-0.543px;">Sort order</div>
<svg style="left:1113px;top:168px;" width="7" height="3.5" viewBox="0 0 7 3.5"><path d="M0 0H7L3.5 3.5Z" fill="#000"/></svg>
<svg style="left:1129px;top:160px;" width="16" height="16" viewBox="0 0 16 16"><rect x="0.8" y="0.8" width="14.4" height="14.4" rx="1" fill="#e8e8e8" stroke="#4a70a0" stroke-width="1.5"/><path d="M3.5 8L6.5 11L12.5 4" stroke="#20a020" stroke-width="2.2" fill="none"/></svg>
<div class="t" style="left:1149.5px;top:162.60px;font-size:14px;color:#111;letter-spacing:-0.757px;">Advanced</div>
<div class="a" style="left:852px;top:184px;width:575px;height:780px;background:#fff;border:1px solid #828282"></div>
<div class="t" style="left:860.8px;top:190.75px;font-size:15px;color:#111;letter-spacing:-0.386px;">Property</div>
<div class="t" style="left:1147px;top:190.75px;font-size:15px;color:#111;letter-spacing:-0.8px;">Value</div>
<div class="a" style="left:1140px;top:185px;width:1px;height:29px;background:#e3e3e3;"></div>
<div class="a" style="left:877px;top:214px;width:547px;height:23px;background:#f0f0f0;"></div>
<div class="a" style="left:1140px;top:214px;width:1px;height:23px;background:#e3e3e3;"></div>
<div class="a" style="left:853px;top:236px;width:571px;height:1px;background:#e4e4e4;"></div>
<div class="t" style="left:882.3px;top:218.95px;font-size:13px;color:#111;letter-spacing:-0.26px;">Element name</div>
<div class="t" style="left:1145.3px;top:218.95px;font-size:13px;color:#111;">GenElemInst_168</div>
<div class="a" style="left:1140px;top:237px;width:1px;height:23px;background:#e3e3e3;"></div>
<div class="a" style="left:853px;top:259px;width:571px;height:1px;background:#e4e4e4;"></div>
<div class="t" style="left:882.3px;top:241.95px;font-size:13px;color:#111;">Type of element</div>
<div class="t" style="left:1145.3px;top:241.95px;font-size:13px;color:#111;letter-spacing:-0.066px;">Frame -&gt; JCmpVisuBasic.ButtonStart</div>
<div class="a" style="left:1140px;top:260px;width:1px;height:23px;background:#e3e3e3;"></div>
<div class="a" style="left:853px;top:282px;width:571px;height:1px;background:#e4e4e4;"></div>
<div class="t" style="left:882.3px;top:264.95px;font-size:13px;color:#111;">Clipping</div>
<div class="a" style="left:1276px;top:286px;width:16px;height:16px;display:none"></div>
<div class="a" style="left:1276px;top:264px;width:16px;height:16px;background:#fff;border:1.4px solid #333;border-radius:1.5px"></div>
<div class="a" style="left:1140px;top:283px;width:1px;height:23px;background:#e3e3e3;"></div>
<div class="a" style="left:853px;top:305px;width:571px;height:1px;background:#e4e4e4;"></div>
<div class="t" style="left:882.3px;top:287.95px;font-size:13px;color:#111;">Show frame</div>
<div class="t" style="left:1145.3px;top:287.95px;font-size:13px;color:#111;">No frame</div>
<div class="a" style="left:1140px;top:306px;width:1px;height:22px;background:#e3e3e3;"></div>
<div class="a" style="left:853px;top:327px;width:571px;height:1px;background:#e4e4e4;"></div>
<div class="t" style="left:882.3px;top:310.95px;font-size:13px;color:#111;">Scaling type</div>
<div class="t" style="left:1145.3px;top:310.95px;font-size:13px;color:#111;">Anisotropic</div>
<div class="a" style="left:1140px;top:328px;width:1px;height:23px;background:#e3e3e3;"></div>
<div class="a" style="left:853px;top:350px;width:571px;height:1px;background:#e4e4e4;"></div>
<div class="t" style="left:882.3px;top:332.95px;font-size:13px;color:#111;">Deactivate the background drawing</div>
<div class="a" style="left:1276px;top:354px;width:16px;height:16px;display:none"></div>
<div class="a" style="left:1276px;top:332px;width:16px;height:16px;background:#fff;border:1.4px solid #333;border-radius:1.5px"></div>
<div class="a" style="left:1140px;top:351px;width:1px;height:23px;background:#e3e3e3;"></div>
<div class="a" style="left:853px;top:373px;width:571px;height:1px;background:#e4e4e4;"></div>
<div class="t" style="left:882.3px;top:355.95px;font-size:13px;color:#111;">Swiping behavior</div>
<div class="t" style="left:1145.3px;top:355.95px;font-size:13px;color:#111;">Not swipable</div>
<div class="a" style="left:1140px;top:374px;width:1px;height:23px;background:#e3e3e3;"></div>
<div class="a" style="left:853px;top:396px;width:571px;height:1px;background:#e4e4e4;"></div>
<svg style="left:859px;top:378.5px;" width="11" height="11" viewBox="0 0 11 11"><rect x="0.5" y="0.5" width="10" height="10" rx="1.5" fill="#f4f4f4" stroke="#9fd0d0"/><path d="M2.5 5.5H8.5M5.5 2.5V8.5" stroke="#111" stroke-width="1.3"/></svg>
<div class="t" style="left:882.3px;top:378.95px;font-size:13px;color:#111;">References</div>
<div class="a" style="left:1244px;top:375px;width:80px;height:20px;background:#ebebeb;border:1px solid;border-color:#fafafa #5a5a5a #5a5a5a #fafafa"></div>
<div class="t" style="left:1252.5px;top:376.95px;font-size:13px;color:#111;letter-spacing:0.254px;">Configure...</div>
<div class="a" style="left:877px;top:397px;width:547px;height:23px;background:#dcdcdc;"></div>
<div class="a" style="left:853px;top:419px;width:24px;height:1px;background:#e4e4e4;"></div>
<svg style="left:859px;top:401.5px;" width="11" height="11" viewBox="0 0 11 11"><rect x="0.5" y="0.5" width="10" height="10" rx="1.5" fill="#f4f4f4" stroke="#9fd0d0"/><path d="M2.5 5.5H8.5M5.5 2.5V8.5" stroke="#111" stroke-width="1.3"/></svg>
<div class="t" style="left:880px;top:401.44px;font-size:13.6px;color:#111;">Position</div>
<div class="a" style="left:877px;top:420px;width:547px;height:23px;background:#dcdcdc;"></div>
<div class="a" style="left:853px;top:442px;width:24px;height:1px;background:#e4e4e4;"></div>
<svg style="left:859px;top:424.5px;" width="11" height="11" viewBox="0 0 11 11"><rect x="0.5" y="0.5" width="10" height="10" rx="1.5" fill="#f4f4f4" stroke="#9fd0d0"/><path d="M2.5 5.5H8.5M5.5 2.5V8.5" stroke="#111" stroke-width="1.3"/></svg>
<div class="t" style="left:880px;top:424.44px;font-size:13.6px;color:#111;">Center</div>
<div class="a" style="left:877px;top:443px;width:547px;height:23px;background:#dcdcdc;"></div>
<div class="a" style="left:853px;top:465px;width:24px;height:1px;background:#e4e4e4;"></div>
<svg style="left:859px;top:447.5px;" width="11" height="11" viewBox="0 0 11 11"><rect x="0.5" y="0.5" width="10" height="10" rx="1.5" fill="#f4f4f4" stroke="#9fd0d0"/><path d="M2.5 5.5H8.5M5.5 2.5V8.5" stroke="#111" stroke-width="1.3"/></svg>
<div class="t" style="left:880px;top:447.44px;font-size:13.6px;color:#111;">Colors</div>
<div class="a" style="left:877px;top:466px;width:547px;height:23px;background:#dcdcdc;"></div>
<div class="a" style="left:853px;top:488px;width:24px;height:1px;background:#e4e4e4;"></div>
<svg style="left:859px;top:470.5px;" width="11" height="11" viewBox="0 0 11 11"><rect x="0.5" y="0.5" width="10" height="10" rx="1.5" fill="#f4f4f4" stroke="#9fd0d0"/><path d="M2.5 5.5H8.5M5.5 2.5V8.5" stroke="#111" stroke-width="1.3"/></svg>
<div class="t" style="left:880px;top:470.44px;font-size:13.6px;color:#111;">Appearance</div>
<div class="a" style="left:877px;top:489px;width:547px;height:23px;background:#dcdcdc;"></div>
<div class="a" style="left:853px;top:511px;width:24px;height:1px;background:#e4e4e4;"></div>
<svg style="left:859px;top:493.5px;" width="11" height="11" viewBox="0 0 11 11"><rect x="0.5" y="0.5" width="10" height="10" rx="1.5" fill="#f4f4f4" stroke="#9fd0d0"/><path d="M2.5 5.5H8.5M5.5 2.5V8.5" stroke="#111" stroke-width="1.3"/></svg>
<div class="t" style="left:880px;top:493.44px;font-size:13.6px;color:#111;">Texts</div>
<div class="a" style="left:877px;top:512px;width:547px;height:23px;background:#dcdcdc;"></div>
<div class="a" style="left:853px;top:534px;width:24px;height:1px;background:#e4e4e4;"></div>
<svg style="left:859px;top:516.5px;" width="11" height="11" viewBox="0 0 11 11"><rect x="0.5" y="0.5" width="10" height="10" rx="1.5" fill="#f4f4f4" stroke="#9fd0d0"/><path d="M2.5 5.5H8.5M5.5 2.5V8.5" stroke="#111" stroke-width="1.3"/></svg>
<div class="t" style="left:880px;top:516.44px;font-size:13.6px;color:#111;">Text properties</div>
<div class="a" style="left:877px;top:535px;width:547px;height:23px;background:#dcdcdc;"></div>
<div class="a" style="left:853px;top:557px;width:24px;height:1px;background:#e4e4e4;"></div>
<svg style="left:859px;top:539.5px;" width="11" height="11" viewBox="0 0 11 11"><rect x="0.5" y="0.5" width="10" height="10" rx="1.5" fill="#f4f4f4" stroke="#9fd0d0"/><path d="M2.5 5.5H8.5M5.5 2.5V8.5" stroke="#111" stroke-width="1.3"/></svg>
<div class="t" style="left:880px;top:539.44px;font-size:13.6px;color:#111;">Absolute movement</div>
<div class="a" style="left:877px;top:558px;width:547px;height:22px;background:#dcdcdc;"></div>
<div class="a" style="left:853px;top:579px;width:24px;height:1px;background:#e4e4e4;"></div>
<svg style="left:859px;top:562.5px;" width="11" height="11" viewBox="0 0 11 11"><rect x="0.5" y="0.5" width="10" height="10" rx="1.5" fill="#f4f4f4" stroke="#9fd0d0"/><path d="M2.5 5.5H8.5M5.5 2.5V8.5" stroke="#111" stroke-width="1.3"/></svg>
<div class="t" style="left:880px;top:562.44px;font-size:13.6px;color:#111;">Relative movement</div>
<div class="a" style="left:877px;top:580px;width:547px;height:23px;background:#dcdcdc;"></div>
<div class="a" style="left:853px;top:602px;width:24px;height:1px;background:#e4e4e4;"></div>
<svg style="left:859px;top:584.5px;" width="11" height="11" viewBox="0 0 11 11"><rect x="0.5" y="0.5" width="10" height="10" rx="1.5" fill="#f4f4f4" stroke="#9fd0d0"/><path d="M2.5 5.5H8.5M5.5 2.5V8.5" stroke="#111" stroke-width="1.3"/></svg>
<div class="t" style="left:880px;top:584.44px;font-size:13.6px;color:#111;">Text variables</div>
<div class="a" style="left:877px;top:603px;width:547px;height:23px;background:#dcdcdc;"></div>
<div class="a" style="left:853px;top:625px;width:24px;height:1px;background:#e4e4e4;"></div>
<svg style="left:859px;top:607.5px;" width="11" height="11" viewBox="0 0 11 11"><rect x="0.5" y="0.5" width="10" height="10" rx="1.5" fill="#f4f4f4" stroke="#9fd0d0"/><path d="M2.5 5.5H8.5M5.5 2.5V8.5" stroke="#111" stroke-width="1.3"/></svg>
<div class="t" style="left:880px;top:607.44px;font-size:13.6px;color:#111;">Dynamic texts</div>
<div class="a" style="left:877px;top:626px;width:547px;height:23px;background:#dcdcdc;"></div>
<div class="a" style="left:853px;top:648px;width:24px;height:1px;background:#e4e4e4;"></div>
<svg style="left:859px;top:630.5px;" width="11" height="11" viewBox="0 0 11 11"><rect x="0.5" y="0.5" width="10" height="10" rx="1.5" fill="#f4f4f4" stroke="#9fd0d0"/><path d="M2.5 5.5H8.5M5.5 2.5V8.5" stroke="#111" stroke-width="1.3"/></svg>
<div class="t" style="left:880px;top:630.44px;font-size:13.6px;color:#111;">Font variables</div>
<div class="a" style="left:877px;top:649px;width:547px;height:23px;background:#dcdcdc;"></div>
<div class="a" style="left:853px;top:671px;width:24px;height:1px;background:#e4e4e4;"></div>
<svg style="left:859px;top:653.5px;" width="11" height="11" viewBox="0 0 11 11"><rect x="0.5" y="0.5" width="10" height="10" rx="1.5" fill="#f4f4f4" stroke="#9fd0d0"/><path d="M2.5 5.5H8.5M5.5 2.5V8.5" stroke="#111" stroke-width="1.3"/></svg>
<div class="t" style="left:880px;top:653.44px;font-size:13.6px;color:#111;">Color variables</div>
<div class="a" style="left:877px;top:672px;width:547px;height:23px;background:#dcdcdc;"></div>
<div class="a" style="left:853px;top:694px;width:24px;height:1px;background:#e4e4e4;"></div>
<svg style="left:859px;top:676.5px;" width="11" height="11" viewBox="0 0 11 11"><rect x="0.5" y="0.5" width="10" height="10" rx="1.5" fill="#f4f4f4" stroke="#9fd0d0"/><path d="M2.5 5.5H8.5M5.5 2.5V8.5" stroke="#111" stroke-width="1.3"/></svg>
<div class="t" style="left:880px;top:676.44px;font-size:13.6px;color:#111;">Appearance variables</div>
<div class="a" style="left:877px;top:695px;width:547px;height:23px;background:#dcdcdc;"></div>
<div class="a" style="left:853px;top:717px;width:24px;height:1px;background:#e4e4e4;"></div>
<svg style="left:859px;top:699.5px;" width="11" height="11" viewBox="0 0 11 11"><rect x="0.5" y="0.5" width="10" height="10" rx="1.5" fill="#f4f4f4" stroke="#9fd0d0"/><path d="M2.5 5.5H8.5M5.5 2.5V8.5" stroke="#111" stroke-width="1.3"/></svg>
<div class="t" style="left:880px;top:699.44px;font-size:13.6px;color:#111;">Switch frame variable</div>
<div class="a" style="left:877px;top:718px;width:547px;height:23px;background:#dcdcdc;"></div>
<div class="a" style="left:853px;top:740px;width:24px;height:1px;background:#e4e4e4;"></div>
<svg style="left:859px;top:722.5px;" width="11" height="11" viewBox="0 0 11 11"><rect x="0.5" y="0.5" width="10" height="10" rx="1.5" fill="#f4f4f4" stroke="#9fd0d0"/><path d="M2.5 5.5H8.5" stroke="#111" stroke-width="1.3"/></svg>
<div class="t" style="left:880px;top:722.44px;font-size:13.6px;color:#111;">State variables</div>
<div class="a" style="left:1140px;top:741px;width:1px;height:23px;background:#e3e3e3;"></div>
<div class="a" style="left:853px;top:763px;width:571px;height:1px;background:#e4e4e4;"></div>
<div class="t" style="left:906.7px;top:745.95px;font-size:13px;color:#111;">Invisible</div>
<div class="t" style="left:1145.3px;top:745.95px;font-size:13px;color:#111;letter-spacing:-0.057px;">not(FC_isRightEnabled("Psc_Start"))</div>
<div class="a" style="left:1140px;top:764px;width:1px;height:22px;background:#e3e3e3;"></div>
<div class="a" style="left:853px;top:785px;width:571px;height:1px;background:#e4e4e4;"></div>
<div class="t" style="left:906.7px;top:768.95px;font-size:13px;color:#111;">Deactivate inputs</div>
<div class="a" style="left:877px;top:786px;width:547px;height:23px;background:#dcdcdc;"></div>
<div class="a" style="left:853px;top:808px;width:24px;height:1px;background:#e4e4e4;"></div>
<svg style="left:859px;top:790.5px;" width="11" height="11" viewBox="0 0 11 11"><rect x="0.5" y="0.5" width="10" height="10" rx="1.5" fill="#f4f4f4" stroke="#9fd0d0"/><path d="M2.5 5.5H8.5M5.5 2.5V8.5" stroke="#111" stroke-width="1.3"/></svg>
<div class="t" style="left:880px;top:790.44px;font-size:13.6px;color:#111;">Input configuration</div>
<div class="a" style="left:903px;top:763px;width:460px;height:2px;background:#e00000;"></div>
<div class="a" style="left:852px;top:973px;width:574px;height:67px;background:#efefef;border:1px solid #dedede"></div>
<div class="t" style="left:858.5px;top:976.27px;font-size:13.8px;color:#111;">This property contains the name of the instance that will represent the selected visual</div>
<div class="t" style="left:858.5px;top:991.77px;font-size:13.8px;color:#111;letter-spacing:-0.02px;">element in the visualization.</div>
<div class="a" style="left:852px;top:1044px;width:575px;height:1px;background:#b8b8b8;"></div>
<svg style="left:856px;top:1047px;" width="19" height="19" viewBox="0 0 19 19"><path d="M4.5 0.5H13L17.5 5V17.5H4.5Z" fill="#fff" stroke="#222"/><path d="M14 7H16M14 10H16M14 13H16" stroke="#888"/><rect x="7" y="1.5" width="5" height="5" fill="#f0e020" stroke="#a00000"/><rect x="7" y="6.5" width="5" height="6" fill="#e02060" stroke="#1010a0"/><rect x="0.5" y="7.5" width="6" height="5" fill="#f0f020" stroke="#10a010" stroke-width="1.2"/></svg>
<div class="t" style="left:879px;top:1049.95px;font-size:13px;color:#6e6e8a;letter-spacing:-0.115px;">Visualization Toolbox</div>
<svg style="left:1005px;top:1044px;" width="94" height="26" viewBox="0 0 94 26"><path d="M0.5 0V20.5L4.5 24.5H89.5L93.5 20.5V0" fill="#fff" stroke="#a8a8a8"/></svg>
<div class="a" style="left:1006px;top:1044px;width:92px;height:1px;background:#fff;"></div>
<svg style="left:1008px;top:1046px;" width="20" height="20" viewBox="0 0 20 20"><rect x="0" y="2" width="18" height="18" fill="#999"/><rect x="1" y="4" width="14" height="13" rx="1.5" fill="#fff" stroke="#111" stroke-width="1.5"/><path d="M3 7L6 3L10 7L14 3" stroke="#555" stroke-width="2" fill="none"/><path d="M3 11H5M7 11H13M3 14H5M7 14H13" stroke="#333" stroke-width="1.5"/><rect x="15.5" y="0" width="2.5" height="8" fill="#0a0a90"/></svg>
<div class="t" style="left:1032.4px;top:1049.95px;font-size:13px;color:#1c1c48;letter-spacing:-0.031px;">Properties</div>
<div class="a" style="left:2px;top:1071px;width:1424px;height:26px;background:linear-gradient(to right,#f2f2f2,#f4f4f4 50%,#f9f9f9);"></div>
<svg style="left:3px;top:1073px;" width="385" height="25" viewBox="0 0 385 25"><path d="M0.5 25V4Q0.5 0.5 4 0.5H379L383.5 5V25" fill="#f2f2f2" stroke="#7a7a7a"/></svg>
<svg style="left:9px;top:1078px;" width="14" height="15" viewBox="0 0 14 15"><rect x="0.8" y="0.8" width="12.4" height="13.4" fill="#fff" stroke="#111" stroke-width="1.6"/><rect x="0" y="0" width="14" height="3" fill="#0a0a90"/><path d="M3 6H11M3 8.5H11M3 11H11" stroke="#777" stroke-width="1.2"/></svg>
<div class="t" style="left:35px;top:1077.60px;font-size:14px;color:#5a6478;letter-spacing:-0.093px;">Messages - Total 0 error(s), 0 warning(s), 27 message(s)</div>
<div class="a" style="left:1px;top:1097px;width:1426px;height:27px;background:#f0f0f0;border-top:1px solid #e2e2e2"></div>
<div class="a" style="left:1px;top:1123px;width:1426px;height:1px;background:#fff;"></div>
<div class="a" style="left:405px;top:1100px;width:1px;height:22px;background:#d7d7d7;"></div>
<div class="a" style="left:694px;top:1100px;width:1px;height:22px;background:#d7d7d7;"></div>
<div class="a" style="left:742px;top:1100px;width:1px;height:22px;background:#d7d7d7;"></div>
<div class="a" style="left:1059px;top:1100px;width:1px;height:22px;background:#d7d7d7;"></div>
<div class="a" style="left:1088px;top:1100px;width:1px;height:22px;background:#d7d7d7;"></div>
<div class="a" style="left:1377px;top:1100px;width:1px;height:22px;background:#d7d7d7;"></div>
<div class="a" style="left:1405px;top:1100px;width:1px;height:22px;background:#d7d7d7;"></div>
<div class="t" style="left:513.8px;top:1104.55px;font-size:13px;color:#111;letter-spacing:-0.002px;">X : 775, Y : 1</div>
<svg style="left:706px;top:1101px;" width="16" height="15" viewBox="0 0 16 15"><path d="M0.5 2.5Q0.5 0.5 4 0.5Q7.5 0.5 7.5 2.5V12.5Q7.5 14.5 4 14.5Q0.5 14.5 0.5 12.5Z" fill="#f0d040" stroke="#8a6a10"/><path d="M10 3H15M10 6H15M10 9H15M10 12H15" stroke="#1a1ab0" stroke-width="1.5"/></svg>
<div class="t" style="left:782px;top:1104.45px;font-size:13px;color:#111;letter-spacing:-0.128px;">Last build:</div>
<svg style="left:849px;top:1104px;" width="14" height="14" viewBox="0 0 14 14"><circle cx="7" cy="7" r="6.5" fill="#e01010"/><path d="M4.5 4.5L9.5 9.5M9.5 4.5L4.5 9.5" stroke="#fff" stroke-width="2"/></svg>
<div class="t" style="left:869.7px;top:1104.45px;font-size:13px;color:#111;">0</div>
<svg style="left:884px;top:1104px;" width="14" height="14" viewBox="0 0 14 14"><circle cx="7" cy="7" r="6.3" fill="#f8f010" stroke="#555" stroke-width=".8"/><circle cx="7" cy="5.5" r="2" fill="#111"/><path d="M7 6V10.5" stroke="#111" stroke-width="1.5"/></svg>
<div class="t" style="left:904.7px;top:1104.45px;font-size:13px;color:#111;">0</div>
<div class="t" style="left:938.7px;top:1104.45px;font-size:13px;color:#111;letter-spacing:-0.411px;">Precompile</div>
<svg style="left:1006px;top:1105px;" width="19" height="14" viewBox="0 0 19 14"><path d="M1.5 7.5L6.5 12L17.5 1.5" stroke="#20a020" stroke-width="2.8" fill="none"/></svg>
<svg style="left:1064px;top:1101px;" width="21" height="20" viewBox="0 0 21 20"><circle cx="7" cy="8" r="5.5" fill="none" stroke="#9a9ac8" stroke-width="3.5" stroke-dasharray="2.2 1.1"/><circle cx="17" cy="3.5" r="2.6" fill="#10c010"/><rect x="9.5" y="9.5" width="10" height="10" fill="#c8d8f0" stroke="#222" stroke-width="1.2"/><path d="M12 12.5H13M16 12.5H17M12 16H17" stroke="#222" stroke-width="1.2"/></svg>
<div class="t" style="left:1165.6px;top:1104.60px;font-size:14px;color:#111;letter-spacing:0.03px;">Project user: (nobody)</div>
<svg style="left:1384px;top:1102px;" width="14" height="17" viewBox="0 0 14 17"><path d="M7 0.7L13.3 3V8Q13.3 14 7 16.3Q0.7 14 0.7 8V3Z" fill="#f0e060" stroke="#555" stroke-width="1.2"/><path d="M7 1V16M1 8H13" stroke="#888" stroke-width=".8"/><path d="M7 1L13 3V8H7Z M7 8H1Q1 14 7 16Z" fill="#bbb"/></svg>
<div class="a" style="left:1421.4px;top:1112.0px;width:2px;height:2px;background:#b8b8b8;"></div>
<div class="a" style="left:1417.7px;top:1115.7px;width:2px;height:2px;background:#b8b8b8;"></div>
<div class="a" style="left:1421.4px;top:1115.7px;width:2px;height:2px;background:#b8b8b8;"></div>
<div class="a" style="left:1414.0px;top:1119.4px;width:2px;height:2px;background:#b8b8b8;"></div>
<div class="a" style="left:1417.7px;top:1119.4px;width:2px;height:2px;background:#b8b8b8;"></div>
<div class="a" style="left:1421.4px;top:1119.4px;width:2px;height:2px;background:#b8b8b8;"></div>
<div class="a" style="left:1426px;top:127px;width:1px;height:970px;background:#6a6a6a;"></div>
<div class="a" style="left:1px;top:127px;width:1px;height:914px;background:#6a6a6a;"></div>
<div class="a" style="left:0;top:0;width:1428px;height:1125px;border:1px solid #5f5f5f;z-index:50"></div>
</body></html>
